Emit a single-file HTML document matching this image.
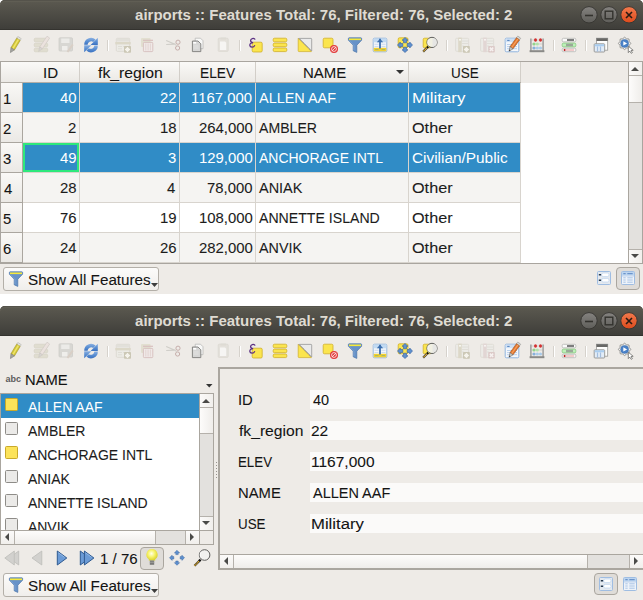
<!DOCTYPE html><html><head><meta charset="utf-8"><style>
html,body{margin:0;padding:0}
body{width:643px;height:600px;overflow:hidden;position:relative;background:#ffffff;font-family:"Liberation Sans",sans-serif}
.a{position:absolute}
.t{position:absolute;white-space:nowrap;line-height:16px;font-family:"Liberation Sans",sans-serif}
.d{-webkit-text-stroke:0.08px currentColor}
svg{overflow:visible}
</style></head><body>
<div class="a" style="left:0px;top:30px;width:643px;height:264px;background:#eeebe7"></div>
<div class="a" style="left:0px;top:0px;width:643px;height:30px;background:linear-gradient(#57554d,#5a584f 6%,#3f3e3a 96%,#34332f 96%);border-radius:5px 5px 0 0;box-shadow:inset 0 1px 0 #55534b, inset 0 2px 0 #605e54"></div>
<div class="t" style="left:135.10px;top:7px;font-size:15px;color:#dfdbd2;font-weight:bold;">airports :: Features Total: 76, Filtered: 76, Selected: 2</div>
<svg class="a" style="left:580px;top:6px" width="58" height="18" viewBox="0 0 58 18"><defs><linearGradient id="gb" x1="0" y1="0" x2="0" y2="1"><stop offset="0" stop-color="#858380"/><stop offset="1" stop-color="#5e5d59"/></linearGradient><linearGradient id="go" x1="0" y1="0" x2="0" y2="1"><stop offset="0" stop-color="#f37a4d"/><stop offset="1" stop-color="#dc4a1c"/></linearGradient></defs>
<circle cx="9" cy="8.8" r="8.2" fill="url(#gb)" stroke="#393834" stroke-width="1"/><path d="M5 9.5h8" stroke="#33322e" stroke-width="1.6"/>
<circle cx="29" cy="8.8" r="8.2" fill="url(#gb)" stroke="#393834" stroke-width="1"/><rect x="25.2" y="5.2" width="7.6" height="7.6" fill="none" stroke="#33322e" stroke-width="1.4"/>
<circle cx="49" cy="8.8" r="8.2" fill="url(#go)" stroke="#393834" stroke-width="1"/><path d="M46 6l6 6M52 6l-6 6" stroke="#2a1a12" stroke-width="1.6"/></svg>
<svg class="a" style="left:8px;top:37px" width="16" height="16" viewBox="0 0 16 16"><g transform="rotate(31 7 8)"><rect x="4.9" y="-0.8" width="4.2" height="2.2" rx="0.8" fill="#e4e4e0" stroke="#a7a7a3" stroke-width="0.5"/><rect x="4.9" y="1.4" width="4.2" height="11" fill="#d3c738" stroke="#a09320" stroke-width="0.5"/><rect x="6.3" y="1.4" width="1.4" height="11" fill="#efe56c"/><path d="M4.9 12.4 L9.1 12.4 L7 16.8 Z" fill="#a5a5a2" stroke="#74746f" stroke-width="0.5"/></g></svg>
<svg class="a" style="left:33px;top:37px" width="16" height="16" viewBox="0 0 16 16"><rect x="1.2" y="1.2" width="13.5" height="3.6" rx="1.2" fill="#e0ddd0" stroke="#d3d0c3" stroke-width="0.6"/><rect x="1.2" y="6.2" width="13.5" height="3.6" rx="1.2" fill="#e0ddd0" stroke="#d3d0c3" stroke-width="0.6"/><rect x="1.2" y="11.2" width="13.5" height="3.6" rx="1.2" fill="#e0ddd0" stroke="#d3d0c3" stroke-width="0.6"/><g transform="rotate(34 10 8)"><rect x="8.4" y="-1.5" width="3.2" height="13" fill="#ebe2de" stroke="#cfc8c4" stroke-width="0.6"/><path d="M8.4 11.5 L11.6 11.5 L10 15.8 Z" fill="#d9d5d2" stroke="#c8c4c0" stroke-width="0.5"/></g></svg>
<svg class="a" style="left:58px;top:37px" width="16" height="16" viewBox="0 0 16 16"><rect x="1" y="0.8" width="13.5" height="13.2" rx="1" fill="#d8d7d3" stroke="#cecdc9" stroke-width="0.8"/><rect x="3.2" y="1.5" width="8.3" height="4.5" fill="#ecebe8"/><rect x="4" y="9" width="5.5" height="4.5" fill="#efeeeb"/><path d="M9.5 15 L14.8 7.5" stroke="#d9cfc6" stroke-width="2"/></svg>
<svg class="a" style="left:83px;top:37px" width="16" height="16" viewBox="0 0 16 16"><defs><linearGradient id="rg" x1="0" y1="0" x2="0" y2="1"><stop offset="0" stop-color="#8ab0e2"/><stop offset="0.5" stop-color="#5b8fd2"/><stop offset="1" stop-color="#3a72c2"/></linearGradient></defs><g fill="url(#rg)"><path d="M1.2 7.8 A6.8 6.8 0 0 1 12.6 2.6 L10.2 5 A3.6 3.6 0 0 0 4.6 7.8 Z"/><path d="M14.8 0.8 V8 H7.6 Z"/><path d="M14.8 8.4 A6.8 6.8 0 0 1 3.4 13.6 L5.8 11.2 A3.6 3.6 0 0 0 11.4 8.4 Z"/><path d="M1.2 15.2 V8.2 H8.4 Z"/></g></svg>
<div class="a" style="left:107px;top:40px;width:1px;height:11px;background:#d6d2cc;box-shadow:1px 0 0 #ffffff"></div>
<svg class="a" style="left:115px;top:37px" width="16" height="16" viewBox="0 0 16 16"><rect x="1.3" y="1.3" width="13.4" height="13" rx="1" fill="#ecebe6" stroke="#dbd8d1" stroke-width="0.9"/><rect x="1.5" y="2" width="13" height="2.5" fill="#e2e0da"/><rect x="0.3" y="5" width="15.4" height="2.4" fill="#dcd8c8"/><path d="M3 9.5h4M3 11.8h4M8 9.5h4" stroke="#dedbd4" stroke-width="0.9"/><rect x="9" y="9" width="7" height="6.8" rx="0.8" fill="#cbc7b5"/><path d="M12.5 10v5M10 12.5h5M10.8 10.8l3.4 3.4M14.2 10.8l-3.4 3.4" stroke="#f5f3ec" stroke-width="1.1"/></svg>
<svg class="a" style="left:140px;top:37px" width="16" height="16" viewBox="0 0 16 16"><rect x="1" y="1" width="9.6" height="9" rx="1" fill="#e2dfd0"/><path d="M3 3.3h10" stroke="#d8c0bf" stroke-width="1.2"/><rect x="3.4" y="5.4" width="9.4" height="9.2" rx="0.8" fill="#f0e9e8" stroke="#d6bfbd" stroke-width="0.9"/><path d="M5.8 6.5v7M8.1 6.5v7M10.4 6.5v7" stroke="#decbc9" stroke-width="0.7"/></svg>
<svg class="a" style="left:165px;top:37px" width="16" height="16" viewBox="0 0 16 16"><path d="M1.2 3.5 L10.5 7.5 M1.2 7.5 L10.5 7.2" stroke="#cfcdc8" stroke-width="1.2"/><circle cx="13" cy="5.2" r="2.1" fill="none" stroke="#c6aeab" stroke-width="1"/><circle cx="12.6" cy="11" r="2.1" fill="none" stroke="#c6aeab" stroke-width="1"/><path d="M10.5 7.3 L11.5 9.2" stroke="#cfcdc8" stroke-width="1"/></svg>
<svg class="a" style="left:190px;top:37px" width="16" height="16" viewBox="0 0 16 16"><path d="M5.2 1.2h5.3l2.5 2.5v8h-7.8z" fill="#f8f8f7" stroke="#b9b9b7" stroke-width="0.8"/><path d="M2.4 4h5.6l2.8 2.8v7.8h-8.4z" fill="#d6d6d5" stroke="#7d7d7b" stroke-width="0.9"/><rect x="3.2" y="5" width="3" height="1.6" fill="#fff"/><path d="M3.5 9h5M3.5 11h5" stroke="#e6e6e5" stroke-width="0.8"/></svg>
<svg class="a" style="left:215px;top:37px" width="16" height="16" viewBox="0 0 16 16"><rect x="3.2" y="1.2" width="10" height="13.2" rx="1" fill="#e4e1db" stroke="#dcd9d2" stroke-width="0.8"/><rect x="5.5" y="0.5" width="5.5" height="2" fill="#dedbd4"/><path d="M5 4.5h5l1.2 1.2v7.3H5z" fill="#f6f5f3"/></svg>
<div class="a" style="left:239px;top:40px;width:1px;height:11px;background:#d6d2cc;box-shadow:1px 0 0 #ffffff"></div>
<svg class="a" style="left:248px;top:37px" width="16" height="16" viewBox="0 0 16 16"><rect x="4.2" y="5.2" width="10" height="9.8" rx="1.3" fill="#fbe54e" stroke="#cfae28" stroke-width="0.8"/><path d="M6.8 2.2 C5.8 1 2.6 1.2 2.6 3.6 C2.6 5.2 4 5.6 5.2 5.6 C3.4 5.6 1.6 6.4 1.8 8.4 C2 10.6 5.8 10.8 6.6 8.6" fill="none" stroke="#5b3082" stroke-width="1.25" stroke-linecap="round"/></svg>
<svg class="a" style="left:272px;top:37px" width="16" height="16" viewBox="0 0 16 16"><rect x="1.2" y="1.2" width="13.6" height="3.6" rx="1.3" fill="#fbe54e" stroke="#cfae28" stroke-width="0.8"/><rect x="1.2" y="6.1" width="13.6" height="3.6" rx="1.3" fill="#fbe54e" stroke="#cfae28" stroke-width="0.8"/><rect x="1.2" y="11" width="13.6" height="3.6" rx="1.3" fill="#fbe54e" stroke="#cfae28" stroke-width="0.8"/></svg>
<svg class="a" style="left:297px;top:37px" width="16" height="16" viewBox="0 0 16 16"><path d="M2.2 1.4 H14 Q14.7 1.4 14.7 2.1 V14 Z" fill="#eaeaea" stroke="#a0a0a0" stroke-width="0.9"/><path d="M1.2 1.3 L14.4 14.6 H2 Q1.2 14.6 1.2 13.8 Z" fill="#fbe54e" stroke="#cfae28" stroke-width="0.7"/><path d="M1.8 1.4 L14.4 14" stroke="#8f8f8f" stroke-width="0.9" stroke-dasharray="1 0.6"/></svg>
<svg class="a" style="left:322px;top:37px" width="16" height="16" viewBox="0 0 16 16"><rect x="1.2" y="1.2" width="9.8" height="9.6" rx="1.3" fill="#fbe54e" stroke="#cfae28" stroke-width="0.8"/><circle cx="12" cy="12" r="4" fill="#e23a3a"/><circle cx="12" cy="12" r="2.4" fill="none" stroke="#fbe3e3" stroke-width="0.9"/><path d="M9.8 14.2 L14.2 9.8" stroke="#fbe3e3" stroke-width="0.9"/></svg>
<svg class="a" style="left:347px;top:37px" width="16" height="16" viewBox="0 0 16 16"><path d="M1.4 1.5 Q1.4 0.8 2.1 0.8 H13.9 Q14.6 0.8 14.6 1.5 V3.2 L9.8 8.2 V15.4 L6.2 13.8 V8.2 L1.4 3.2 Z" fill="#6792c8" stroke="#4b75aa" stroke-width="0.7"/><rect x="2" y="1.5" width="12" height="1.6" fill="#f7ea3a"/><path d="M2.4 3.6 L6.9 8.4 V13.2" fill="none" stroke="#8fb0da" stroke-width="0.6"/></svg>
<svg class="a" style="left:372px;top:37px" width="16" height="16" viewBox="0 0 16 16"><rect x="1.2" y="1.2" width="13.6" height="13.6" rx="1.2" fill="#f3f6fa" stroke="#8fb3de" stroke-width="0.9"/><rect x="1.7" y="1.7" width="12.6" height="3.6" fill="#c2daf2"/><path d="M2.5 7.3h4M9.5 7.3h4M2.5 9.5h4M9.5 9.5h4" stroke="#c9daee" stroke-width="0.9"/><rect x="1.7" y="10.8" width="12.6" height="3.5" fill="#f2d12e"/><path d="M3 12.6h3.5M9.5 12.6h3.5" stroke="#8fb07a" stroke-width="0.8"/><path d="M8 1.8 V11.5" stroke="#3d6fae" stroke-width="1.8"/><path d="M4.8 5.2 L8 1.8 L11.2 5.2 Z" fill="#3d6fae"/></svg>
<svg class="a" style="left:397px;top:37px" width="16" height="16" viewBox="0 0 16 16"><rect x="1.2" y="0.8" width="9.8" height="10" rx="1.3" fill="#fbe54e" stroke="#cfae28" stroke-width="0.8"/><g fill="#5d90d0" stroke="#36609a" stroke-width="0.6" stroke-linejoin="round"><path d="M8 0.5 L11 3.3 H9.5 V5.8 H6.5 V3.3 H5 Z"/><path d="M8 15.5 L11 12.7 H9.5 V10.2 H6.5 V12.7 H5 Z"/><path d="M0.5 8 L3.3 5 V6.5 H5.8 V9.5 H3.3 V11 Z"/><path d="M15.5 8 L12.7 5 V6.5 H10.2 V9.5 H12.7 V11 Z"/></g></svg>
<svg class="a" style="left:422px;top:37px" width="16" height="16" viewBox="0 0 16 16"><rect x="1.2" y="1.2" width="8" height="9.6" rx="1.2" fill="#fbe54e" stroke="#cfae28" stroke-width="0.8"/><path d="M6.2 9.6 L4.8 11" stroke="#111" stroke-width="2.2"/><path d="M5 10.8 L1.2 14.6" stroke="#3a3a3a" stroke-width="2.2"/><path d="M5 10.8 L1.2 14.6" stroke="#f2b82a" stroke-width="1.2" stroke-dasharray="1.2 0.5"/><circle cx="10" cy="5.4" r="5.1" fill="#f1f0e2" stroke="#5e5e5c" stroke-width="1"/><path d="M10.5 0.9 A4.5 4.5 0 0 1 10.5 9.9 Z" fill="#e6e6e4"/><path d="M7.5 1.8 A4.4 4.4 0 0 0 7.5 9" fill="none" stroke="#ffffff" stroke-width="0.8"/></svg>
<div class="a" style="left:446px;top:40px;width:1px;height:11px;background:#d6d2cc;box-shadow:1px 0 0 #ffffff"></div>
<svg class="a" style="left:455px;top:37px" width="16" height="16" viewBox="0 0 16 16"><rect x="0.6" y="1.3" width="13" height="13" rx="1" fill="#ecebe7" stroke="#dedbd5" stroke-width="0.9"/><path d="M7 4h6M7 6.5h6M7 9h2" stroke="#dfdcd6" stroke-width="0.9"/><rect x="3.2" y="0.6" width="3.5" height="14.6" fill="#dcd8c8"/><rect x="4" y="2" width="2" height="1.6" fill="#f6f5f0"/><rect x="8" y="9" width="6.8" height="6.8" rx="0.8" fill="#cbc7b5"/><path d="M11.4 10v5M8.9 12.5h5M9.7 10.8l3.4 3.4M13.1 10.8l-3.4 3.4" stroke="#f5f3ec" stroke-width="1.1"/></svg>
<svg class="a" style="left:480px;top:37px" width="16" height="16" viewBox="0 0 16 16"><rect x="0.6" y="1.3" width="13" height="13" rx="1" fill="#ecebe7" stroke="#dedbd5" stroke-width="0.9"/><path d="M7 4h6M7 6.5h6M7 9h2" stroke="#dfdcd6" stroke-width="0.9"/><rect x="3.2" y="0.6" width="3.5" height="14.6" fill="#e2d6d4"/><rect x="4" y="2" width="2" height="1.6" fill="#f6f2f1"/><rect x="8.2" y="9" width="6.6" height="6.6" rx="0.8" fill="#dccac8"/><path d="M9.8 10.6l3.4 3.4M13.2 10.6l-3.4 3.4" stroke="#f6f1f0" stroke-width="1.5"/></svg>
<svg class="a" style="left:504px;top:37px" width="16" height="16" viewBox="0 0 16 16"><rect x="1.2" y="1.2" width="13.6" height="13.6" rx="1.2" fill="#f4f7fb" stroke="#90b4df" stroke-width="1"/><rect x="1.7" y="1.7" width="12.6" height="3.4" fill="#cfe0f3"/><path d="M3.2 3.4h2.4" stroke="#4f7fbf" stroke-width="1"/><path d="M3 7.5h10M3 9.6h10M3 11.7h10" stroke="#a9c5e8" stroke-width="0.8"/><g transform="rotate(36 9.5 8)"><rect x="7.6" y="-1.8" width="3.8" height="2.2" rx="0.6" fill="#d6d6d4" stroke="#8a8a88" stroke-width="0.5"/><rect x="7.6" y="0.4" width="3.8" height="11" fill="#e2742c" stroke="#9b4a12" stroke-width="0.5"/><rect x="8.9" y="0.4" width="1.2" height="11" fill="#f5a262"/><path d="M7.6 11.4 L11.4 11.4 L9.5 15.6 Z" fill="#c8c8c4" stroke="#666" stroke-width="0.5"/><path d="M8.9 14 L10.1 14 L9.5 15.8 Z" fill="#222"/></g></svg>
<svg class="a" style="left:529px;top:37px" width="16" height="16" viewBox="0 0 16 16"><path d="M2.5 3h11M2.5 7h11M2.5 11h11" stroke="#c8c8c6" stroke-width="0.8"/><rect x="1.2" y="1.5" width="1.4" height="12.5" fill="#9a9a98"/><rect x="13.4" y="1.5" width="1.4" height="12.5" fill="#9a9a98"/><rect x="0.6" y="13.2" width="14.8" height="2" fill="#8a8a88"/><ellipse cx="6.5" cy="3" rx="1.5" ry="1.7" fill="#d23030"/><ellipse cx="11.5" cy="3" rx="1.5" ry="1.7" fill="#d23030"/><ellipse cx="5" cy="7" rx="1.5" ry="1.6" fill="#92d48c"/><ellipse cx="8.3" cy="7" rx="1.5" ry="1.6" fill="#b0e4aa"/><ellipse cx="5" cy="11" rx="1.5" ry="1.6" fill="#86b0dc"/><ellipse cx="8.3" cy="11" rx="1.5" ry="1.6" fill="#a8cbeb"/><ellipse cx="11.5" cy="11" rx="1.5" ry="1.6" fill="#a8cbeb"/></svg>
<div class="a" style="left:553px;top:40px;width:1px;height:11px;background:#d6d2cc;box-shadow:1px 0 0 #ffffff"></div>
<svg class="a" style="left:561px;top:37px" width="16" height="16" viewBox="0 0 16 16"><rect x="1.2" y="1.3" width="13.6" height="3.5" rx="1.2" fill="#fafafa" stroke="#b5b5b3" stroke-width="0.8"/><path d="M6 3h7" stroke="#3a3a3a" stroke-width="1.3"/><rect x="1.2" y="6.1" width="13.6" height="3.8" rx="1.2" fill="#bdf0b8" stroke="#86c882" stroke-width="0.8"/><rect x="5" y="6.7" width="7" height="2.6" fill="#9aa898"/><rect x="1.2" y="11.2" width="13.6" height="3.5" rx="1.2" fill="#f4f4f4" stroke="#b5b5b3" stroke-width="0.8"/><circle cx="3.6" cy="13" r="1" fill="#b81414"/><path d="M5 13h8" stroke="#f0a0a0" stroke-width="1"/></svg>
<div class="a" style="left:585px;top:40px;width:1px;height:11px;background:#d6d2cc;box-shadow:1px 0 0 #ffffff"></div>
<svg class="a" style="left:593px;top:37px" width="16" height="16" viewBox="0 0 16 16"><rect x="3.5" y="1.2" width="11.2" height="12" fill="#fdfdfc" stroke="#9a9a98" stroke-width="0.8"/><rect x="3.5" y="1.2" width="11.2" height="2.8" fill="#686866"/><rect x="1.2" y="6.8" width="10.5" height="8.2" rx="0.8" fill="#e2ecf7" stroke="#929290" stroke-width="0.9"/><rect x="1.7" y="7.3" width="9.5" height="2" fill="#a9cdf0"/><path d="M4.5 9.5v5M7.5 9.5v5" stroke="#a4bedf" stroke-width="1.2"/></svg>
<svg class="a" style="left:618px;top:37px" width="16" height="16" viewBox="0 0 16 16"><path d="M12.80 6.40 L11.22 8.31 L10.98 10.78 L8.51 11.02 L6.60 12.60 L4.69 11.02 L2.22 10.78 L1.98 8.31 L0.40 6.40 L1.98 4.49 L2.22 2.02 L4.69 1.78 L6.60 0.20 L8.51 1.78 L10.98 2.02 L11.22 4.49 Z" fill="#f2f2f0" stroke="#8d8d8b" stroke-width="0.9" stroke-linejoin="round"/><circle cx="6.6" cy="6.4" r="4" fill="#4a82c8" stroke="#3a6aa8" stroke-width="0.5"/><path d="M5.3 4.3 L9.1 6.4 L5.3 8.5Z" fill="#fff"/><path d="M10.3 9.2 L10.3 15.6 L11.8 14.1 L13.2 16.3 L14.4 15.6 L13 13.5 L15.2 13.3 Z" fill="#fff" stroke="#5a5a58" stroke-width="0.7" stroke-linejoin="round"/></svg>
<div class="a" style="left:0px;top:61px;width:643px;height:203px;box-sizing:border-box;border:1px solid #a9a59f;background:#ffffff"></div>
<div class="a" style="left:1px;top:62px;width:627px;height:20px;background:linear-gradient(#faf9f7,#ebe9e5)"></div>
<div class="a" style="left:1px;top:82px;width:627px;height:1px;background:#b2aea7"></div>
<div class="a" style="left:79px;top:62px;width:1px;height:20px;background:#d2cec8"></div>
<div class="a" style="left:179px;top:62px;width:1px;height:20px;background:#d2cec8"></div>
<div class="a" style="left:255px;top:62px;width:1px;height:20px;background:#d2cec8"></div>
<div class="a" style="left:408px;top:62px;width:1px;height:20px;background:#d2cec8"></div>
<div class="a" style="left:520px;top:62px;width:1px;height:20px;background:#d2cec8"></div>
<div class="a" style="left:521px;top:62px;width:107px;height:20px;background:#eeebe7"></div>
<div class="a" style="left:521px;top:82px;width:107px;height:1px;background:#eeebe7"></div>
<div class="t d" style="left:43.22px;top:65px;font-size:14px;color:#141414;transform:scaleX(1.0769);transform-origin:0 0;">ID</div>
<div class="t d" style="left:97.70px;top:65px;font-size:14px;color:#141414;transform:scaleX(1.1263);transform-origin:0 0;">fk_region</div>
<div class="t d" style="left:199.72px;top:65px;font-size:14px;color:#141414;transform:scaleX(0.9800);transform-origin:0 0;">ELEV</div>
<div class="t d" style="left:303.23px;top:65px;font-size:14px;color:#141414;transform:scaleX(1.0692);transform-origin:0 0;">NAME</div>
<svg class="a" style="left:396px;top:70px" width="8" height="4" viewBox="0 0 8 4"><path d="M0 0h8L4 4z" fill="#333"/></svg>
<div class="t d" style="left:450.74px;top:65px;font-size:14px;color:#141414;transform:scaleX(0.9630);transform-origin:0 0;">USE</div>
<div class="a" style="left:1px;top:83px;width:21px;height:29px;background:linear-gradient(#f9f8f6,#ebe9e5)"></div>
<div class="a" style="left:22px;top:83px;width:1px;height:30px;background:#aaa69f"></div>
<div class="a" style="left:1px;top:112px;width:21px;height:1px;background:#aaa69f"></div>
<div class="t d" style="left:2.84px;top:91px;font-size:14px;color:#141414;transform:scaleX(1.0640);transform-origin:0 0;">1</div>
<div class="a" style="left:23px;top:83px;width:497px;height:29px;background:#308cc6"></div>
<div class="a" style="left:23px;top:112px;width:497px;height:1px;background:#d8d4ce"></div>
<div class="a" style="left:79px;top:83px;width:1px;height:30px;background:#d8d4ce"></div>
<div class="a" style="left:179px;top:83px;width:1px;height:30px;background:#d8d4ce"></div>
<div class="a" style="left:255px;top:83px;width:1px;height:30px;background:#d8d4ce"></div>
<div class="a" style="left:408px;top:83px;width:1px;height:30px;background:#d8d4ce"></div>
<div class="a" style="left:520px;top:83px;width:1px;height:30px;background:#d8d4ce"></div>
<div class="t" style="left:59.64px;top:90px;font-size:14px;color:#ffffff;transform:scaleX(1.0640);transform-origin:0 0;">40</div>
<div class="t" style="left:159.74px;top:90px;font-size:14px;color:#ffffff;transform:scaleX(1.0640);transform-origin:0 0;">22</div>
<div class="t" style="left:191.05px;top:90px;font-size:14px;color:#ffffff;transform:scaleX(1.0640);transform-origin:0 0;">1167,000</div>
<div class="t" style="left:259.30px;top:90px;font-size:14px;color:#ffffff;transform:scaleX(1.0311);transform-origin:0 0;">ALLEN AAF</div>
<div class="t" style="left:411.90px;top:90px;font-size:14px;color:#ffffff;transform:scaleX(1.2023);transform-origin:0 0;">Military</div>
<div class="a" style="left:1px;top:113px;width:21px;height:29px;background:linear-gradient(#f9f8f6,#ebe9e5)"></div>
<div class="a" style="left:22px;top:113px;width:1px;height:30px;background:#aaa69f"></div>
<div class="a" style="left:1px;top:142px;width:21px;height:1px;background:#aaa69f"></div>
<div class="t d" style="left:2.84px;top:121px;font-size:14px;color:#141414;transform:scaleX(1.0640);transform-origin:0 0;">2</div>
<div class="a" style="left:23px;top:113px;width:497px;height:29px;background:#f5f4f2"></div>
<div class="a" style="left:23px;top:142px;width:497px;height:1px;background:#d8d4ce"></div>
<div class="a" style="left:79px;top:113px;width:1px;height:30px;background:#d8d4ce"></div>
<div class="a" style="left:179px;top:113px;width:1px;height:30px;background:#d8d4ce"></div>
<div class="a" style="left:255px;top:113px;width:1px;height:30px;background:#d8d4ce"></div>
<div class="a" style="left:408px;top:113px;width:1px;height:30px;background:#d8d4ce"></div>
<div class="a" style="left:520px;top:113px;width:1px;height:30px;background:#d8d4ce"></div>
<div class="t d" style="left:68.15px;top:120px;font-size:14px;color:#1c1c1c;transform:scaleX(1.0640);transform-origin:0 0;">2</div>
<div class="t d" style="left:159.74px;top:120px;font-size:14px;color:#1c1c1c;transform:scaleX(1.0640);transform-origin:0 0;">18</div>
<div class="t d" style="left:198.50px;top:120px;font-size:14px;color:#1c1c1c;transform:scaleX(1.0640);transform-origin:0 0;">264,000</div>
<div class="t d" style="left:259.30px;top:120px;font-size:14px;color:#1c1c1c;transform:scaleX(1.0070);transform-origin:0 0;">AMBLER</div>
<div class="t d" style="left:411.94px;top:120px;font-size:14px;color:#1c1c1c;transform:scaleX(1.1588);transform-origin:0 0;">Other</div>
<div class="a" style="left:1px;top:143px;width:21px;height:29px;background:linear-gradient(#f9f8f6,#ebe9e5)"></div>
<div class="a" style="left:22px;top:143px;width:1px;height:30px;background:#aaa69f"></div>
<div class="a" style="left:1px;top:172px;width:21px;height:1px;background:#aaa69f"></div>
<div class="t d" style="left:2.84px;top:151px;font-size:14px;color:#141414;transform:scaleX(1.0640);transform-origin:0 0;">3</div>
<div class="a" style="left:23px;top:143px;width:497px;height:29px;background:#308cc6"></div>
<div class="a" style="left:23px;top:172px;width:497px;height:1px;background:#d8d4ce"></div>
<div class="a" style="left:79px;top:143px;width:1px;height:30px;background:#d8d4ce"></div>
<div class="a" style="left:179px;top:143px;width:1px;height:30px;background:#d8d4ce"></div>
<div class="a" style="left:255px;top:143px;width:1px;height:30px;background:#d8d4ce"></div>
<div class="a" style="left:408px;top:143px;width:1px;height:30px;background:#d8d4ce"></div>
<div class="a" style="left:520px;top:143px;width:1px;height:30px;background:#d8d4ce"></div>
<div class="t" style="left:59.64px;top:150px;font-size:14px;color:#ffffff;transform:scaleX(1.0640);transform-origin:0 0;">49</div>
<div class="t" style="left:168.25px;top:150px;font-size:14px;color:#ffffff;transform:scaleX(1.0640);transform-origin:0 0;">3</div>
<div class="t" style="left:198.50px;top:150px;font-size:14px;color:#ffffff;transform:scaleX(1.0640);transform-origin:0 0;">129,000</div>
<div class="t" style="left:259.30px;top:150px;font-size:14px;color:#ffffff;transform:scaleX(0.9968);transform-origin:0 0;">ANCHORAGE INTL</div>
<div class="t" style="left:412.00px;top:150px;font-size:14px;color:#ffffff;transform:scaleX(1.0977);transform-origin:0 0;">Civilian/Public</div>
<div class="a" style="left:1px;top:173px;width:21px;height:29px;background:linear-gradient(#f9f8f6,#ebe9e5)"></div>
<div class="a" style="left:22px;top:173px;width:1px;height:30px;background:#aaa69f"></div>
<div class="a" style="left:1px;top:202px;width:21px;height:1px;background:#aaa69f"></div>
<div class="t d" style="left:3.90px;top:181px;font-size:14px;color:#141414;transform:scaleX(1.0640);transform-origin:0 0;">4</div>
<div class="a" style="left:23px;top:173px;width:497px;height:29px;background:#f5f4f2"></div>
<div class="a" style="left:23px;top:202px;width:497px;height:1px;background:#d8d4ce"></div>
<div class="a" style="left:79px;top:173px;width:1px;height:30px;background:#d8d4ce"></div>
<div class="a" style="left:179px;top:173px;width:1px;height:30px;background:#d8d4ce"></div>
<div class="a" style="left:255px;top:173px;width:1px;height:30px;background:#d8d4ce"></div>
<div class="a" style="left:408px;top:173px;width:1px;height:30px;background:#d8d4ce"></div>
<div class="a" style="left:520px;top:173px;width:1px;height:30px;background:#d8d4ce"></div>
<div class="t d" style="left:59.64px;top:180px;font-size:14px;color:#1c1c1c;transform:scaleX(1.0640);transform-origin:0 0;">28</div>
<div class="t d" style="left:167.19px;top:180px;font-size:14px;color:#1c1c1c;transform:scaleX(1.0640);transform-origin:0 0;">4</div>
<div class="t d" style="left:207.01px;top:180px;font-size:14px;color:#1c1c1c;transform:scaleX(1.0640);transform-origin:0 0;">78,000</div>
<div class="t d" style="left:259.30px;top:180px;font-size:14px;color:#1c1c1c;transform:scaleX(1.0333);transform-origin:0 0;">ANIAK</div>
<div class="t d" style="left:411.94px;top:180px;font-size:14px;color:#1c1c1c;transform:scaleX(1.1588);transform-origin:0 0;">Other</div>
<div class="a" style="left:1px;top:203px;width:21px;height:29px;background:linear-gradient(#f9f8f6,#ebe9e5)"></div>
<div class="a" style="left:22px;top:203px;width:1px;height:30px;background:#aaa69f"></div>
<div class="a" style="left:1px;top:232px;width:21px;height:1px;background:#aaa69f"></div>
<div class="t d" style="left:2.84px;top:211px;font-size:14px;color:#141414;transform:scaleX(1.0640);transform-origin:0 0;">5</div>
<div class="a" style="left:23px;top:203px;width:497px;height:29px;background:#ffffff"></div>
<div class="a" style="left:23px;top:232px;width:497px;height:1px;background:#d8d4ce"></div>
<div class="a" style="left:79px;top:203px;width:1px;height:30px;background:#d8d4ce"></div>
<div class="a" style="left:179px;top:203px;width:1px;height:30px;background:#d8d4ce"></div>
<div class="a" style="left:255px;top:203px;width:1px;height:30px;background:#d8d4ce"></div>
<div class="a" style="left:408px;top:203px;width:1px;height:30px;background:#d8d4ce"></div>
<div class="a" style="left:520px;top:203px;width:1px;height:30px;background:#d8d4ce"></div>
<div class="t d" style="left:59.64px;top:210px;font-size:14px;color:#1c1c1c;transform:scaleX(1.0640);transform-origin:0 0;">76</div>
<div class="t d" style="left:159.74px;top:210px;font-size:14px;color:#1c1c1c;transform:scaleX(1.0640);transform-origin:0 0;">19</div>
<div class="t d" style="left:198.50px;top:210px;font-size:14px;color:#1c1c1c;transform:scaleX(1.0640);transform-origin:0 0;">108,000</div>
<div class="t d" style="left:259.30px;top:210px;font-size:14px;color:#1c1c1c;transform:scaleX(1.0084);transform-origin:0 0;">ANNETTE ISLAND</div>
<div class="t d" style="left:411.94px;top:210px;font-size:14px;color:#1c1c1c;transform:scaleX(1.1588);transform-origin:0 0;">Other</div>
<div class="a" style="left:1px;top:233px;width:21px;height:29px;background:linear-gradient(#f9f8f6,#ebe9e5)"></div>
<div class="a" style="left:22px;top:233px;width:1px;height:30px;background:#aaa69f"></div>
<div class="a" style="left:1px;top:262px;width:21px;height:1px;background:#aaa69f"></div>
<div class="t d" style="left:2.84px;top:241px;font-size:14px;color:#141414;transform:scaleX(1.0640);transform-origin:0 0;">6</div>
<div class="a" style="left:23px;top:233px;width:497px;height:29px;background:#f5f4f2"></div>
<div class="a" style="left:23px;top:262px;width:497px;height:1px;background:#d8d4ce"></div>
<div class="a" style="left:79px;top:233px;width:1px;height:30px;background:#d8d4ce"></div>
<div class="a" style="left:179px;top:233px;width:1px;height:30px;background:#d8d4ce"></div>
<div class="a" style="left:255px;top:233px;width:1px;height:30px;background:#d8d4ce"></div>
<div class="a" style="left:408px;top:233px;width:1px;height:30px;background:#d8d4ce"></div>
<div class="a" style="left:520px;top:233px;width:1px;height:30px;background:#d8d4ce"></div>
<div class="t d" style="left:59.64px;top:240px;font-size:14px;color:#1c1c1c;transform:scaleX(1.0640);transform-origin:0 0;">24</div>
<div class="t d" style="left:159.74px;top:240px;font-size:14px;color:#1c1c1c;transform:scaleX(1.0640);transform-origin:0 0;">26</div>
<div class="t d" style="left:198.50px;top:240px;font-size:14px;color:#1c1c1c;transform:scaleX(1.0640);transform-origin:0 0;">282,000</div>
<div class="t d" style="left:259.30px;top:240px;font-size:14px;color:#1c1c1c;transform:scaleX(1.0238);transform-origin:0 0;">ANVIK</div>
<div class="t d" style="left:411.94px;top:240px;font-size:14px;color:#1c1c1c;transform:scaleX(1.1588);transform-origin:0 0;">Other</div>
<div class="a" style="left:23px;top:143px;width:56px;height:29px;box-sizing:border-box;border:2px solid #2ee87c"></div>
<div class="a" style="left:628px;top:62px;width:1px;height:201px;background:#aaa69f"></div>
<div class="a" style="left:629px;top:62px;width:13px;height:201px;background:#e3e1de"></div>
<div class="a" style="left:629px;top:62px;width:13px;height:13px;background:linear-gradient(90deg,#fbfaf9,#f1efec)"></div>
<div class="a" style="left:629px;top:75px;width:13px;height:1px;background:#b5b1ab"></div>
<svg class="a" style="left:631px;top:67px" width="8" height="4" viewBox="0 0 8 4"><path d="M0 4L4.0 0L8 4z" fill="#4a4a48"/></svg>
<div class="a" style="left:629px;top:76px;width:13px;height:26px;background:linear-gradient(90deg,#fdfcfb,#efedea)"></div>
<div class="a" style="left:629px;top:102px;width:13px;height:1px;background:#b5b1ab"></div>
<div class="a" style="left:629px;top:249px;width:13px;height:1px;background:#b5b1ab"></div>
<div class="a" style="left:629px;top:250px;width:13px;height:13px;background:linear-gradient(90deg,#fbfaf9,#f1efec)"></div>
<svg class="a" style="left:631px;top:254px" width="8" height="4" viewBox="0 0 8 4"><path d="M0 0L4.0 4L8 0z" fill="#4a4a48"/></svg>
<div class="a" style="left:3px;top:267px;width:156px;height:24px;box-sizing:border-box;border:1px solid #b3afa8;border-radius:3px;background:linear-gradient(#fcfbfa,#f0eeeb)"></div>
<svg class="a" style="left:8px;top:271px" width="16" height="16" viewBox="0 0 16 16"><path d="M1.4 1.5 Q1.4 0.8 2.1 0.8 H13.9 Q14.6 0.8 14.6 1.5 V3.2 L9.8 8.2 V15.4 L6.2 13.8 V8.2 L1.4 3.2 Z" fill="#6792c8" stroke="#4b75aa" stroke-width="0.7"/><rect x="2" y="1.5" width="12" height="1.6" fill="#f7ea3a"/><path d="M2.4 3.6 L6.9 8.4 V13.2" fill="none" stroke="#8fb0da" stroke-width="0.6"/></svg>
<div class="t d" style="left:28.11px;top:272px;font-size:14px;color:#141414;transform:scaleX(1.0874);transform-origin:0 0;">Show All Features</div>
<svg class="a" style="left:151px;top:283px" width="7" height="4" viewBox="0 0 7 4"><path d="M0 0h7L3.5 4z" fill="#3c3c3c"/></svg>
<svg class="a" style="left:597px;top:271px" width="14" height="14" viewBox="0 0 14 14"><rect x="0.5" y="0.5" width="13" height="13" rx="1" fill="#e4e9ef" stroke="#9fbde2" stroke-width="1"/><path d="M1.8 3.8h2.6M1.8 9.2h2.6" stroke="#26384c" stroke-width="1.5"/><rect x="4.6" y="2" width="7.4" height="3.6" rx="1.6" fill="#fff" stroke="#bcd3ee" stroke-width="0.7"/><rect x="4.6" y="7.4" width="7.4" height="3.6" rx="1.6" fill="#fff" stroke="#bcd3ee" stroke-width="0.7"/></svg>
<div class="a" style="left:616px;top:267px;width:24px;height:23px;box-sizing:border-box;border:1px solid #aaa69f;border-radius:4px;background:#dfdcd8"></div>
<svg class="a" style="left:621px;top:271px" width="14" height="14" viewBox="0 0 14 14"><rect x="0.5" y="0.5" width="13" height="13" rx="1" fill="#eef3f9" stroke="#9fbde2" stroke-width="1"/><rect x="1" y="1" width="12" height="3.4" fill="#bcd5f0"/><path d="M2.3 2.7h2.4M6.3 2.7h5.4" stroke="#5a86c2" stroke-width="1"/><path d="M1 5h12" stroke="#9fbde2" stroke-width="0.6"/><path d="M2.3 6.8h2.4M6.3 6.8h5.4M2.3 9h2.4M6.3 9h5.4M2.3 11.2h2.4M6.3 11.2h5.4" stroke="#a9c4e6" stroke-width="1"/></svg>
<div class="a" style="left:0px;top:336px;width:643px;height:264px;background:#eeebe7"></div>
<div class="a" style="left:0px;top:306px;width:643px;height:30px;background:linear-gradient(#57554d,#5a584f 6%,#3f3e3a 96%,#34332f 96%);border-radius:5px 5px 0 0;box-shadow:inset 0 1px 0 #55534b, inset 0 2px 0 #605e54"></div>
<div class="t" style="left:135.10px;top:313px;font-size:15px;color:#dfdbd2;font-weight:bold;">airports :: Features Total: 76, Filtered: 76, Selected: 2</div>
<svg class="a" style="left:580px;top:312px" width="58" height="18" viewBox="0 0 58 18"><defs><linearGradient id="gb" x1="0" y1="0" x2="0" y2="1"><stop offset="0" stop-color="#858380"/><stop offset="1" stop-color="#5e5d59"/></linearGradient><linearGradient id="go" x1="0" y1="0" x2="0" y2="1"><stop offset="0" stop-color="#f37a4d"/><stop offset="1" stop-color="#dc4a1c"/></linearGradient></defs>
<circle cx="9" cy="8.8" r="8.2" fill="url(#gb)" stroke="#393834" stroke-width="1"/><path d="M5 9.5h8" stroke="#33322e" stroke-width="1.6"/>
<circle cx="29" cy="8.8" r="8.2" fill="url(#gb)" stroke="#393834" stroke-width="1"/><rect x="25.2" y="5.2" width="7.6" height="7.6" fill="none" stroke="#33322e" stroke-width="1.4"/>
<circle cx="49" cy="8.8" r="8.2" fill="url(#go)" stroke="#393834" stroke-width="1"/><path d="M46 6l6 6M52 6l-6 6" stroke="#2a1a12" stroke-width="1.6"/></svg>
<svg class="a" style="left:8px;top:343px" width="16" height="16" viewBox="0 0 16 16"><g transform="rotate(31 7 8)"><rect x="4.9" y="-0.8" width="4.2" height="2.2" rx="0.8" fill="#e4e4e0" stroke="#a7a7a3" stroke-width="0.5"/><rect x="4.9" y="1.4" width="4.2" height="11" fill="#d3c738" stroke="#a09320" stroke-width="0.5"/><rect x="6.3" y="1.4" width="1.4" height="11" fill="#efe56c"/><path d="M4.9 12.4 L9.1 12.4 L7 16.8 Z" fill="#a5a5a2" stroke="#74746f" stroke-width="0.5"/></g></svg>
<svg class="a" style="left:33px;top:343px" width="16" height="16" viewBox="0 0 16 16"><rect x="1.2" y="1.2" width="13.5" height="3.6" rx="1.2" fill="#e0ddd0" stroke="#d3d0c3" stroke-width="0.6"/><rect x="1.2" y="6.2" width="13.5" height="3.6" rx="1.2" fill="#e0ddd0" stroke="#d3d0c3" stroke-width="0.6"/><rect x="1.2" y="11.2" width="13.5" height="3.6" rx="1.2" fill="#e0ddd0" stroke="#d3d0c3" stroke-width="0.6"/><g transform="rotate(34 10 8)"><rect x="8.4" y="-1.5" width="3.2" height="13" fill="#ebe2de" stroke="#cfc8c4" stroke-width="0.6"/><path d="M8.4 11.5 L11.6 11.5 L10 15.8 Z" fill="#d9d5d2" stroke="#c8c4c0" stroke-width="0.5"/></g></svg>
<svg class="a" style="left:58px;top:343px" width="16" height="16" viewBox="0 0 16 16"><rect x="1" y="0.8" width="13.5" height="13.2" rx="1" fill="#d8d7d3" stroke="#cecdc9" stroke-width="0.8"/><rect x="3.2" y="1.5" width="8.3" height="4.5" fill="#ecebe8"/><rect x="4" y="9" width="5.5" height="4.5" fill="#efeeeb"/><path d="M9.5 15 L14.8 7.5" stroke="#d9cfc6" stroke-width="2"/></svg>
<svg class="a" style="left:83px;top:343px" width="16" height="16" viewBox="0 0 16 16"><defs><linearGradient id="rg" x1="0" y1="0" x2="0" y2="1"><stop offset="0" stop-color="#8ab0e2"/><stop offset="0.5" stop-color="#5b8fd2"/><stop offset="1" stop-color="#3a72c2"/></linearGradient></defs><g fill="url(#rg)"><path d="M1.2 7.8 A6.8 6.8 0 0 1 12.6 2.6 L10.2 5 A3.6 3.6 0 0 0 4.6 7.8 Z"/><path d="M14.8 0.8 V8 H7.6 Z"/><path d="M14.8 8.4 A6.8 6.8 0 0 1 3.4 13.6 L5.8 11.2 A3.6 3.6 0 0 0 11.4 8.4 Z"/><path d="M1.2 15.2 V8.2 H8.4 Z"/></g></svg>
<div class="a" style="left:107px;top:346px;width:1px;height:11px;background:#d6d2cc;box-shadow:1px 0 0 #ffffff"></div>
<svg class="a" style="left:115px;top:343px" width="16" height="16" viewBox="0 0 16 16"><rect x="1.3" y="1.3" width="13.4" height="13" rx="1" fill="#ecebe6" stroke="#dbd8d1" stroke-width="0.9"/><rect x="1.5" y="2" width="13" height="2.5" fill="#e2e0da"/><rect x="0.3" y="5" width="15.4" height="2.4" fill="#dcd8c8"/><path d="M3 9.5h4M3 11.8h4M8 9.5h4" stroke="#dedbd4" stroke-width="0.9"/><rect x="9" y="9" width="7" height="6.8" rx="0.8" fill="#cbc7b5"/><path d="M12.5 10v5M10 12.5h5M10.8 10.8l3.4 3.4M14.2 10.8l-3.4 3.4" stroke="#f5f3ec" stroke-width="1.1"/></svg>
<svg class="a" style="left:140px;top:343px" width="16" height="16" viewBox="0 0 16 16"><rect x="1" y="1" width="9.6" height="9" rx="1" fill="#e2dfd0"/><path d="M3 3.3h10" stroke="#d8c0bf" stroke-width="1.2"/><rect x="3.4" y="5.4" width="9.4" height="9.2" rx="0.8" fill="#f0e9e8" stroke="#d6bfbd" stroke-width="0.9"/><path d="M5.8 6.5v7M8.1 6.5v7M10.4 6.5v7" stroke="#decbc9" stroke-width="0.7"/></svg>
<svg class="a" style="left:165px;top:343px" width="16" height="16" viewBox="0 0 16 16"><path d="M1.2 3.5 L10.5 7.5 M1.2 7.5 L10.5 7.2" stroke="#cfcdc8" stroke-width="1.2"/><circle cx="13" cy="5.2" r="2.1" fill="none" stroke="#c6aeab" stroke-width="1"/><circle cx="12.6" cy="11" r="2.1" fill="none" stroke="#c6aeab" stroke-width="1"/><path d="M10.5 7.3 L11.5 9.2" stroke="#cfcdc8" stroke-width="1"/></svg>
<svg class="a" style="left:190px;top:343px" width="16" height="16" viewBox="0 0 16 16"><path d="M5.2 1.2h5.3l2.5 2.5v8h-7.8z" fill="#f8f8f7" stroke="#b9b9b7" stroke-width="0.8"/><path d="M2.4 4h5.6l2.8 2.8v7.8h-8.4z" fill="#d6d6d5" stroke="#7d7d7b" stroke-width="0.9"/><rect x="3.2" y="5" width="3" height="1.6" fill="#fff"/><path d="M3.5 9h5M3.5 11h5" stroke="#e6e6e5" stroke-width="0.8"/></svg>
<svg class="a" style="left:215px;top:343px" width="16" height="16" viewBox="0 0 16 16"><rect x="3.2" y="1.2" width="10" height="13.2" rx="1" fill="#e4e1db" stroke="#dcd9d2" stroke-width="0.8"/><rect x="5.5" y="0.5" width="5.5" height="2" fill="#dedbd4"/><path d="M5 4.5h5l1.2 1.2v7.3H5z" fill="#f6f5f3"/></svg>
<div class="a" style="left:239px;top:346px;width:1px;height:11px;background:#d6d2cc;box-shadow:1px 0 0 #ffffff"></div>
<svg class="a" style="left:248px;top:343px" width="16" height="16" viewBox="0 0 16 16"><rect x="4.2" y="5.2" width="10" height="9.8" rx="1.3" fill="#fbe54e" stroke="#cfae28" stroke-width="0.8"/><path d="M6.8 2.2 C5.8 1 2.6 1.2 2.6 3.6 C2.6 5.2 4 5.6 5.2 5.6 C3.4 5.6 1.6 6.4 1.8 8.4 C2 10.6 5.8 10.8 6.6 8.6" fill="none" stroke="#5b3082" stroke-width="1.25" stroke-linecap="round"/></svg>
<svg class="a" style="left:272px;top:343px" width="16" height="16" viewBox="0 0 16 16"><rect x="1.2" y="1.2" width="13.6" height="3.6" rx="1.3" fill="#fbe54e" stroke="#cfae28" stroke-width="0.8"/><rect x="1.2" y="6.1" width="13.6" height="3.6" rx="1.3" fill="#fbe54e" stroke="#cfae28" stroke-width="0.8"/><rect x="1.2" y="11" width="13.6" height="3.6" rx="1.3" fill="#fbe54e" stroke="#cfae28" stroke-width="0.8"/></svg>
<svg class="a" style="left:297px;top:343px" width="16" height="16" viewBox="0 0 16 16"><path d="M2.2 1.4 H14 Q14.7 1.4 14.7 2.1 V14 Z" fill="#eaeaea" stroke="#a0a0a0" stroke-width="0.9"/><path d="M1.2 1.3 L14.4 14.6 H2 Q1.2 14.6 1.2 13.8 Z" fill="#fbe54e" stroke="#cfae28" stroke-width="0.7"/><path d="M1.8 1.4 L14.4 14" stroke="#8f8f8f" stroke-width="0.9" stroke-dasharray="1 0.6"/></svg>
<svg class="a" style="left:322px;top:343px" width="16" height="16" viewBox="0 0 16 16"><rect x="1.2" y="1.2" width="9.8" height="9.6" rx="1.3" fill="#fbe54e" stroke="#cfae28" stroke-width="0.8"/><circle cx="12" cy="12" r="4" fill="#e23a3a"/><circle cx="12" cy="12" r="2.4" fill="none" stroke="#fbe3e3" stroke-width="0.9"/><path d="M9.8 14.2 L14.2 9.8" stroke="#fbe3e3" stroke-width="0.9"/></svg>
<svg class="a" style="left:347px;top:343px" width="16" height="16" viewBox="0 0 16 16"><path d="M1.4 1.5 Q1.4 0.8 2.1 0.8 H13.9 Q14.6 0.8 14.6 1.5 V3.2 L9.8 8.2 V15.4 L6.2 13.8 V8.2 L1.4 3.2 Z" fill="#6792c8" stroke="#4b75aa" stroke-width="0.7"/><rect x="2" y="1.5" width="12" height="1.6" fill="#f7ea3a"/><path d="M2.4 3.6 L6.9 8.4 V13.2" fill="none" stroke="#8fb0da" stroke-width="0.6"/></svg>
<svg class="a" style="left:372px;top:343px" width="16" height="16" viewBox="0 0 16 16"><rect x="1.2" y="1.2" width="13.6" height="13.6" rx="1.2" fill="#f3f6fa" stroke="#8fb3de" stroke-width="0.9"/><rect x="1.7" y="1.7" width="12.6" height="3.6" fill="#c2daf2"/><path d="M2.5 7.3h4M9.5 7.3h4M2.5 9.5h4M9.5 9.5h4" stroke="#c9daee" stroke-width="0.9"/><rect x="1.7" y="10.8" width="12.6" height="3.5" fill="#f2d12e"/><path d="M3 12.6h3.5M9.5 12.6h3.5" stroke="#8fb07a" stroke-width="0.8"/><path d="M8 1.8 V11.5" stroke="#3d6fae" stroke-width="1.8"/><path d="M4.8 5.2 L8 1.8 L11.2 5.2 Z" fill="#3d6fae"/></svg>
<svg class="a" style="left:397px;top:343px" width="16" height="16" viewBox="0 0 16 16"><rect x="1.2" y="0.8" width="9.8" height="10" rx="1.3" fill="#fbe54e" stroke="#cfae28" stroke-width="0.8"/><g fill="#5d90d0" stroke="#36609a" stroke-width="0.6" stroke-linejoin="round"><path d="M8 0.5 L11 3.3 H9.5 V5.8 H6.5 V3.3 H5 Z"/><path d="M8 15.5 L11 12.7 H9.5 V10.2 H6.5 V12.7 H5 Z"/><path d="M0.5 8 L3.3 5 V6.5 H5.8 V9.5 H3.3 V11 Z"/><path d="M15.5 8 L12.7 5 V6.5 H10.2 V9.5 H12.7 V11 Z"/></g></svg>
<svg class="a" style="left:422px;top:343px" width="16" height="16" viewBox="0 0 16 16"><rect x="1.2" y="1.2" width="8" height="9.6" rx="1.2" fill="#fbe54e" stroke="#cfae28" stroke-width="0.8"/><path d="M6.2 9.6 L4.8 11" stroke="#111" stroke-width="2.2"/><path d="M5 10.8 L1.2 14.6" stroke="#3a3a3a" stroke-width="2.2"/><path d="M5 10.8 L1.2 14.6" stroke="#f2b82a" stroke-width="1.2" stroke-dasharray="1.2 0.5"/><circle cx="10" cy="5.4" r="5.1" fill="#f1f0e2" stroke="#5e5e5c" stroke-width="1"/><path d="M10.5 0.9 A4.5 4.5 0 0 1 10.5 9.9 Z" fill="#e6e6e4"/><path d="M7.5 1.8 A4.4 4.4 0 0 0 7.5 9" fill="none" stroke="#ffffff" stroke-width="0.8"/></svg>
<div class="a" style="left:446px;top:346px;width:1px;height:11px;background:#d6d2cc;box-shadow:1px 0 0 #ffffff"></div>
<svg class="a" style="left:455px;top:343px" width="16" height="16" viewBox="0 0 16 16"><rect x="0.6" y="1.3" width="13" height="13" rx="1" fill="#ecebe7" stroke="#dedbd5" stroke-width="0.9"/><path d="M7 4h6M7 6.5h6M7 9h2" stroke="#dfdcd6" stroke-width="0.9"/><rect x="3.2" y="0.6" width="3.5" height="14.6" fill="#dcd8c8"/><rect x="4" y="2" width="2" height="1.6" fill="#f6f5f0"/><rect x="8" y="9" width="6.8" height="6.8" rx="0.8" fill="#cbc7b5"/><path d="M11.4 10v5M8.9 12.5h5M9.7 10.8l3.4 3.4M13.1 10.8l-3.4 3.4" stroke="#f5f3ec" stroke-width="1.1"/></svg>
<svg class="a" style="left:480px;top:343px" width="16" height="16" viewBox="0 0 16 16"><rect x="0.6" y="1.3" width="13" height="13" rx="1" fill="#ecebe7" stroke="#dedbd5" stroke-width="0.9"/><path d="M7 4h6M7 6.5h6M7 9h2" stroke="#dfdcd6" stroke-width="0.9"/><rect x="3.2" y="0.6" width="3.5" height="14.6" fill="#e2d6d4"/><rect x="4" y="2" width="2" height="1.6" fill="#f6f2f1"/><rect x="8.2" y="9" width="6.6" height="6.6" rx="0.8" fill="#dccac8"/><path d="M9.8 10.6l3.4 3.4M13.2 10.6l-3.4 3.4" stroke="#f6f1f0" stroke-width="1.5"/></svg>
<svg class="a" style="left:504px;top:343px" width="16" height="16" viewBox="0 0 16 16"><rect x="1.2" y="1.2" width="13.6" height="13.6" rx="1.2" fill="#f4f7fb" stroke="#90b4df" stroke-width="1"/><rect x="1.7" y="1.7" width="12.6" height="3.4" fill="#cfe0f3"/><path d="M3.2 3.4h2.4" stroke="#4f7fbf" stroke-width="1"/><path d="M3 7.5h10M3 9.6h10M3 11.7h10" stroke="#a9c5e8" stroke-width="0.8"/><g transform="rotate(36 9.5 8)"><rect x="7.6" y="-1.8" width="3.8" height="2.2" rx="0.6" fill="#d6d6d4" stroke="#8a8a88" stroke-width="0.5"/><rect x="7.6" y="0.4" width="3.8" height="11" fill="#e2742c" stroke="#9b4a12" stroke-width="0.5"/><rect x="8.9" y="0.4" width="1.2" height="11" fill="#f5a262"/><path d="M7.6 11.4 L11.4 11.4 L9.5 15.6 Z" fill="#c8c8c4" stroke="#666" stroke-width="0.5"/><path d="M8.9 14 L10.1 14 L9.5 15.8 Z" fill="#222"/></g></svg>
<svg class="a" style="left:529px;top:343px" width="16" height="16" viewBox="0 0 16 16"><path d="M2.5 3h11M2.5 7h11M2.5 11h11" stroke="#c8c8c6" stroke-width="0.8"/><rect x="1.2" y="1.5" width="1.4" height="12.5" fill="#9a9a98"/><rect x="13.4" y="1.5" width="1.4" height="12.5" fill="#9a9a98"/><rect x="0.6" y="13.2" width="14.8" height="2" fill="#8a8a88"/><ellipse cx="6.5" cy="3" rx="1.5" ry="1.7" fill="#d23030"/><ellipse cx="11.5" cy="3" rx="1.5" ry="1.7" fill="#d23030"/><ellipse cx="5" cy="7" rx="1.5" ry="1.6" fill="#92d48c"/><ellipse cx="8.3" cy="7" rx="1.5" ry="1.6" fill="#b0e4aa"/><ellipse cx="5" cy="11" rx="1.5" ry="1.6" fill="#86b0dc"/><ellipse cx="8.3" cy="11" rx="1.5" ry="1.6" fill="#a8cbeb"/><ellipse cx="11.5" cy="11" rx="1.5" ry="1.6" fill="#a8cbeb"/></svg>
<div class="a" style="left:553px;top:346px;width:1px;height:11px;background:#d6d2cc;box-shadow:1px 0 0 #ffffff"></div>
<svg class="a" style="left:561px;top:343px" width="16" height="16" viewBox="0 0 16 16"><rect x="1.2" y="1.3" width="13.6" height="3.5" rx="1.2" fill="#fafafa" stroke="#b5b5b3" stroke-width="0.8"/><path d="M6 3h7" stroke="#3a3a3a" stroke-width="1.3"/><rect x="1.2" y="6.1" width="13.6" height="3.8" rx="1.2" fill="#bdf0b8" stroke="#86c882" stroke-width="0.8"/><rect x="5" y="6.7" width="7" height="2.6" fill="#9aa898"/><rect x="1.2" y="11.2" width="13.6" height="3.5" rx="1.2" fill="#f4f4f4" stroke="#b5b5b3" stroke-width="0.8"/><circle cx="3.6" cy="13" r="1" fill="#b81414"/><path d="M5 13h8" stroke="#f0a0a0" stroke-width="1"/></svg>
<div class="a" style="left:585px;top:346px;width:1px;height:11px;background:#d6d2cc;box-shadow:1px 0 0 #ffffff"></div>
<svg class="a" style="left:593px;top:343px" width="16" height="16" viewBox="0 0 16 16"><rect x="3.5" y="1.2" width="11.2" height="12" fill="#fdfdfc" stroke="#9a9a98" stroke-width="0.8"/><rect x="3.5" y="1.2" width="11.2" height="2.8" fill="#686866"/><rect x="1.2" y="6.8" width="10.5" height="8.2" rx="0.8" fill="#e2ecf7" stroke="#929290" stroke-width="0.9"/><rect x="1.7" y="7.3" width="9.5" height="2" fill="#a9cdf0"/><path d="M4.5 9.5v5M7.5 9.5v5" stroke="#a4bedf" stroke-width="1.2"/></svg>
<svg class="a" style="left:618px;top:343px" width="16" height="16" viewBox="0 0 16 16"><path d="M12.80 6.40 L11.22 8.31 L10.98 10.78 L8.51 11.02 L6.60 12.60 L4.69 11.02 L2.22 10.78 L1.98 8.31 L0.40 6.40 L1.98 4.49 L2.22 2.02 L4.69 1.78 L6.60 0.20 L8.51 1.78 L10.98 2.02 L11.22 4.49 Z" fill="#f2f2f0" stroke="#8d8d8b" stroke-width="0.9" stroke-linejoin="round"/><circle cx="6.6" cy="6.4" r="4" fill="#4a82c8" stroke="#3a6aa8" stroke-width="0.5"/><path d="M5.3 4.3 L9.1 6.4 L5.3 8.5Z" fill="#fff"/><path d="M10.3 9.2 L10.3 15.6 L11.8 14.1 L13.2 16.3 L14.4 15.6 L13 13.5 L15.2 13.3 Z" fill="#fff" stroke="#5a5a58" stroke-width="0.7" stroke-linejoin="round"/></svg>
<svg class="a" style="left:5px;top:375px" width="16" height="8" viewBox="0 0 16 8"><text x="0.5" y="7" font-family="Liberation Sans" font-weight="bold" font-size="9" fill="#5c5c5c">abc</text></svg>
<div class="t d" style="left:24.65px;top:372px;font-size:14px;color:#111;transform:scaleX(1.0513);transform-origin:0 0;">NAME</div>
<svg class="a" style="left:206px;top:384px" width="6.5" height="3.5" viewBox="0 0 6.5 3.5"><path d="M0 0h6.5L3.25 3.5z" fill="#333"/></svg>
<div class="a" style="left:0px;top:393px;width:214px;height:152px;box-sizing:border-box;border:1px solid #aaa69f;background:#fff"></div>
<div class="a" style="left:1px;top:394px;width:198px;height:136px;overflow:hidden">
<div class="a" style="left:0;top:0px;width:198px;height:24px;background:#308cc6"></div>
<div class="a" style="left:4px;top:4px;width:11px;height:11px;background:#fce35a;border:1px solid #c9a92a;border-radius:1.5px"></div>
<div class="t" style="left:26.9px;top:5px;font-size:14px;color:#fff">ALLEN AAF</div>
<div class="a" style="left:4px;top:28px;width:11px;height:11px;background:#ebeae8;border:1px solid #8e8c88;border-radius:1.5px"></div>
<div class="t d" style="left:26.9px;top:29px;font-size:14px;color:#1c1c1c">AMBLER</div>
<div class="a" style="left:4px;top:52px;width:11px;height:11px;background:#fce35a;border:1px solid #c9a92a;border-radius:1.5px"></div>
<div class="t d" style="left:26.9px;top:53px;font-size:14px;color:#1c1c1c">ANCHORAGE INTL</div>
<div class="a" style="left:4px;top:76px;width:11px;height:11px;background:#ebeae8;border:1px solid #8e8c88;border-radius:1.5px"></div>
<div class="t d" style="left:26.9px;top:77px;font-size:14px;color:#1c1c1c">ANIAK</div>
<div class="a" style="left:4px;top:100px;width:11px;height:11px;background:#ebeae8;border:1px solid #8e8c88;border-radius:1.5px"></div>
<div class="t d" style="left:26.9px;top:101px;font-size:14px;color:#1c1c1c">ANNETTE ISLAND</div>
<div class="a" style="left:4px;top:124px;width:11px;height:11px;background:#ebeae8;border:1px solid #8e8c88;border-radius:1.5px"></div>
<div class="t d" style="left:26.9px;top:125px;font-size:14px;color:#1c1c1c">ANVIK</div>
</div>
<div class="a" style="left:199px;top:394px;width:1px;height:136px;background:#aaa69f"></div>
<div class="a" style="left:200px;top:394px;width:13px;height:136px;background:#e3e1de"></div>
<div class="a" style="left:200px;top:394px;width:13px;height:13px;background:linear-gradient(90deg,#fbfaf9,#f1efec)"></div>
<div class="a" style="left:200px;top:407px;width:13px;height:1px;background:#b5b1ab"></div>
<svg class="a" style="left:202px;top:399px" width="8" height="4" viewBox="0 0 8 4"><path d="M0 4L4.0 0L8 4z" fill="#4a4a48"/></svg>
<div class="a" style="left:200px;top:408px;width:13px;height:25px;background:linear-gradient(90deg,#fdfcfb,#efedea)"></div>
<div class="a" style="left:200px;top:433px;width:13px;height:1px;background:#b5b1ab"></div>
<div class="a" style="left:200px;top:516px;width:13px;height:1px;background:#b5b1ab"></div>
<div class="a" style="left:200px;top:517px;width:13px;height:13px;background:linear-gradient(90deg,#fbfaf9,#f1efec)"></div>
<svg class="a" style="left:202px;top:521px" width="8" height="4" viewBox="0 0 8 4"><path d="M0 0L4.0 4L8 0z" fill="#4a4a48"/></svg>
<div class="a" style="left:1px;top:530px;width:212px;height:1px;background:#aaa69f"></div>
<div class="a" style="left:1px;top:531px;width:198px;height:13px;background:#e3e1de"></div>
<div class="a" style="left:1px;top:531px;width:13px;height:13px;background:linear-gradient(#fbfaf9,#f1efec)"></div>
<div class="a" style="left:14px;top:531px;width:1px;height:13px;background:#b5b1ab"></div>
<svg class="a" style="left:5px;top:533px" width="4" height="8" viewBox="0 0 4 8"><path d="M4 0L0 4L4 8z" fill="#4a4a48"/></svg>
<div class="a" style="left:15px;top:531px;width:140px;height:13px;background:linear-gradient(#fdfcfb,#efedea)"></div>
<div class="a" style="left:155px;top:531px;width:1px;height:13px;background:#b5b1ab"></div>
<div class="a" style="left:185px;top:531px;width:1px;height:13px;background:#b5b1ab"></div>
<div class="a" style="left:186px;top:531px;width:13px;height:13px;background:linear-gradient(#fbfaf9,#f1efec)"></div>
<svg class="a" style="left:190px;top:533px" width="4" height="8" viewBox="0 0 4 8"><path d="M0 0L4 4L0 8z" fill="#4a4a48"/></svg>
<div class="a" style="left:199px;top:530px;width:1px;height:14px;background:#aaa69f"></div>
<div class="a" style="left:200px;top:531px;width:13px;height:13px;background:#eeebe7"></div>
<div class="a" style="left:216px;top:462px;width:1px;height:1px;background:#97948f"></div>
<div class="a" style="left:216px;top:465px;width:1px;height:1px;background:#97948f"></div>
<div class="a" style="left:216px;top:468px;width:1px;height:1px;background:#97948f"></div>
<div class="a" style="left:216px;top:471px;width:1px;height:1px;background:#97948f"></div>
<div class="a" style="left:216px;top:474px;width:1px;height:1px;background:#97948f"></div>
<div class="a" style="left:216px;top:477px;width:1px;height:1px;background:#97948f"></div>
<div class="a" style="left:218px;top:367px;width:425px;height:203px;box-sizing:border-box;border:1px solid #a9a59f;border-width:2px 0 2px 2px;border-color:#aaa69f"></div>
<div class="t d" style="left:237.84px;top:392px;font-size:14px;color:#141414;transform:scaleX(1.0577);transform-origin:0 0;">ID</div>
<div class="a" style="left:310px;top:390px;width:333px;height:19px;background:#fbfaf9"></div>
<div class="t d" style="left:312.50px;top:392px;font-size:14px;color:#141414;transform:scaleX(1.0333);transform-origin:0 0;">40</div>
<div class="t d" style="left:238.90px;top:423px;font-size:14px;color:#141414;transform:scaleX(1.1184);transform-origin:0 0;">fk_region</div>
<div class="a" style="left:310px;top:421px;width:333px;height:19px;background:#fbfaf9"></div>
<div class="t d" style="left:311.39px;top:423px;font-size:14px;color:#141414;transform:scaleX(1.1071);transform-origin:0 0;">22</div>
<div class="t d" style="left:237.95px;top:454px;font-size:14px;color:#141414;transform:scaleX(0.9500);transform-origin:0 0;">ELEV</div>
<div class="a" style="left:310px;top:452px;width:333px;height:19px;background:#fbfaf9"></div>
<div class="t d" style="left:311.39px;top:454px;font-size:14px;color:#141414;transform:scaleX(1.1071);transform-origin:0 0;">1167,000</div>
<div class="t d" style="left:237.84px;top:485px;font-size:14px;color:#141414;transform:scaleX(1.0577);transform-origin:0 0;">NAME</div>
<div class="a" style="left:310px;top:483px;width:333px;height:19px;background:#fbfaf9"></div>
<div class="t d" style="left:312.50px;top:485px;font-size:14px;color:#141414;transform:scaleX(1.0338);transform-origin:0 0;">ALLEN AAF</div>
<div class="t d" style="left:237.95px;top:516px;font-size:14px;color:#141414;transform:scaleX(0.9537);transform-origin:0 0;">USE</div>
<div class="a" style="left:310px;top:514px;width:333px;height:19px;background:#fbfaf9"></div>
<div class="t d" style="left:311.31px;top:516px;font-size:14px;color:#141414;transform:scaleX(1.1919);transform-origin:0 0;">Military</div>
<div class="a" style="left:220px;top:554px;width:423px;height:1px;background:#aaa69f"></div>
<div class="a" style="left:220px;top:555px;width:423px;height:13px;background:#e3e1de"></div>
<div class="a" style="left:220px;top:555px;width:13px;height:13px;background:linear-gradient(#fbfaf9,#f1efec)"></div>
<div class="a" style="left:233px;top:555px;width:1px;height:13px;background:#b5b1ab"></div>
<svg class="a" style="left:224px;top:557px" width="4" height="8" viewBox="0 0 4 8"><path d="M4 0L0 4L4 8z" fill="#4a4a48"/></svg>
<div class="a" style="left:234px;top:555px;width:353px;height:13px;background:linear-gradient(#fdfcfb,#efedea)"></div>
<div class="a" style="left:587px;top:555px;width:1px;height:13px;background:#b5b1ab"></div>
<div class="a" style="left:629px;top:555px;width:1px;height:13px;background:#b5b1ab"></div>
<div class="a" style="left:630px;top:555px;width:13px;height:13px;background:linear-gradient(#fbfaf9,#f1efec)"></div>
<svg class="a" style="left:634px;top:557px" width="4" height="8" viewBox="0 0 4 8"><path d="M0 0L4 4L0 8z" fill="#4a4a48"/></svg>
<svg class="a" style="left:4px;top:550px" width="16" height="16" viewBox="0 0 16 16"><path d="M14.7 1 V15 L5.2 8 Z" fill="#d2d1ce" stroke="#bdbcb9" stroke-width="0.8" stroke-linejoin="round"/><path d="M10.3 1 V15 L0.8 8 Z" fill="#d2d1ce" stroke="#bdbcb9" stroke-width="0.8" stroke-linejoin="round"/></svg>
<svg class="a" style="left:31px;top:550px" width="12" height="16" viewBox="0 0 12 16"><path d="M10.8 1 V15 L1 8 Z" fill="#d2d1ce" stroke="#bdbcb9" stroke-width="0.8" stroke-linejoin="round"/></svg>
<svg class="a" style="left:56px;top:550px" width="12" height="16" viewBox="0 0 12 16"><path d="M1.3 1 V15 L10.8 8 Z" fill="#6b9bd6" stroke="#2f5a90" stroke-width="1" stroke-linejoin="round"/><path d="M2.3 2.8 L8.5 7.2" stroke="#9cc0ea" stroke-width="0.8"/></svg>
<svg class="a" style="left:79px;top:550px" width="16" height="16" viewBox="0 0 16 16"><path d="M1.3 1 V15 L10.8 8 Z" fill="#6b9bd6" stroke="#2f5a90" stroke-width="1" stroke-linejoin="round"/><path d="M5.4 1 V15 L14.9 8 Z" fill="#6b9bd6" stroke="#2f5a90" stroke-width="1" stroke-linejoin="round"/><path d="M6.4 2.8 L12.6 7.2" stroke="#9cc0ea" stroke-width="0.8"/></svg>
<div class="t d" style="left:99.72px;top:551px;font-size:14px;color:#141414;transform:scaleX(1.0765);transform-origin:0 0;">1 / 76</div>
<div class="a" style="left:140px;top:547px;width:24px;height:23px;box-sizing:border-box;border:1px solid #aaa69f;border-radius:4px;background:#dfdcd8"></div>
<svg class="a" style="left:145px;top:548px" width="14" height="19" viewBox="0 0 14 19"><defs><radialGradient id="bulb" cx="0.45" cy="0.4" r="0.6"><stop offset="0" stop-color="#ffffe8"/><stop offset="0.5" stop-color="#f7f36a"/><stop offset="1" stop-color="#d8d02a"/></radialGradient></defs><path d="M7 1 A5.6 5.6 0 0 1 10.2 11.2 V12.5 H3.8 V11.2 A5.6 5.6 0 0 1 7 1 Z" fill="url(#bulb)"/><rect x="4.8" y="12.5" width="4.4" height="4.3" fill="#7a7a78"/><rect x="4.8" y="13.8" width="4.4" height="0.8" fill="#a8a8a6"/></svg>
<svg class="a" style="left:169px;top:550px" width="16" height="16" viewBox="0 0 16 16"><g fill="#5d90d0" stroke="#3e69a3" stroke-width="0.5" stroke-linejoin="round"><path d="M8 0.3 L10.6 2.9 H9.2 V4.6 H6.8 V2.9 H5.4 Z"/><path d="M8 15.3 L10.6 12.7 H9.2 V11 H6.8 V12.7 H5.4 Z"/><path d="M0.5 7.8 L3.1 5.2 V6.6 H4.8 V9 H3.1 V10.4 Z"/><path d="M15.5 7.8 L12.9 5.2 V6.6 H11.2 V9 H12.9 V10.4 Z"/></g></svg>
<svg class="a" style="left:193px;top:549px" width="18" height="18" viewBox="0 0 18 18"><path d="M7.6 10.6 L5.8 12.4" stroke="#111" stroke-width="2.4"/><path d="M6 12.2 L1.5 16.7" stroke="#333" stroke-width="2.3"/><path d="M6 12.2 L1.5 16.7" stroke="#f2b82a" stroke-width="1.3" stroke-dasharray="1.3 0.5"/><circle cx="11.6" cy="6" r="5.3" fill="#f1f1ef" stroke="#5e5e5c" stroke-width="1"/><path d="M8.5 2.6 A4.4 4.4 0 0 0 8.2 8.8" fill="none" stroke="#ffffff" stroke-width="0.9"/></svg>
<div class="a" style="left:3px;top:573px;width:156px;height:24px;box-sizing:border-box;border:1px solid #b3afa8;border-radius:3px;background:linear-gradient(#fcfbfa,#f0eeeb)"></div>
<svg class="a" style="left:8px;top:577px" width="16" height="16" viewBox="0 0 16 16"><path d="M1.4 1.5 Q1.4 0.8 2.1 0.8 H13.9 Q14.6 0.8 14.6 1.5 V3.2 L9.8 8.2 V15.4 L6.2 13.8 V8.2 L1.4 3.2 Z" fill="#6792c8" stroke="#4b75aa" stroke-width="0.7"/><rect x="2" y="1.5" width="12" height="1.6" fill="#f7ea3a"/><path d="M2.4 3.6 L6.9 8.4 V13.2" fill="none" stroke="#8fb0da" stroke-width="0.6"/></svg>
<div class="t d" style="left:28.11px;top:578px;font-size:14px;color:#141414;transform:scaleX(1.0874);transform-origin:0 0;">Show All Features</div>
<svg class="a" style="left:151px;top:589px" width="7" height="4" viewBox="0 0 7 4"><path d="M0 0h7L3.5 4z" fill="#3c3c3c"/></svg>
<div class="a" style="left:594px;top:573px;width:24px;height:22px;box-sizing:border-box;border:1px solid #aaa69f;border-radius:4px;background:#dfdcd8"></div>
<svg class="a" style="left:599px;top:577px" width="14" height="14" viewBox="0 0 14 14"><rect x="0.5" y="0.5" width="13" height="13" rx="1" fill="#e4e9ef" stroke="#9fbde2" stroke-width="1"/><path d="M1.8 3.8h2.6M1.8 9.2h2.6" stroke="#26384c" stroke-width="1.5"/><rect x="4.6" y="2" width="7.4" height="3.6" rx="1.6" fill="#fff" stroke="#bcd3ee" stroke-width="0.7"/><rect x="4.6" y="7.4" width="7.4" height="3.6" rx="1.6" fill="#fff" stroke="#bcd3ee" stroke-width="0.7"/></svg>
<svg class="a" style="left:623px;top:577px" width="14" height="14" viewBox="0 0 14 14"><rect x="0.5" y="0.5" width="13" height="13" rx="1" fill="#eef3f9" stroke="#9fbde2" stroke-width="1"/><rect x="1" y="1" width="12" height="3.4" fill="#bcd5f0"/><path d="M2.3 2.7h2.4M6.3 2.7h5.4" stroke="#5a86c2" stroke-width="1"/><path d="M1 5h12" stroke="#9fbde2" stroke-width="0.6"/><path d="M2.3 6.8h2.4M6.3 6.8h5.4M2.3 9h2.4M6.3 9h5.4M2.3 11.2h2.4M6.3 11.2h5.4" stroke="#a9c4e6" stroke-width="1"/></svg>
</body></html>
